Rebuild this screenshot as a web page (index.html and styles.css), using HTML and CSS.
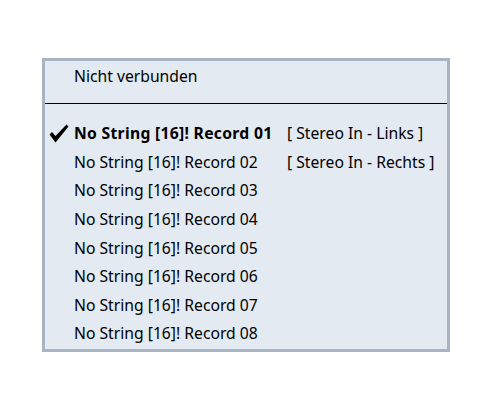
FILE: index.html
```
<!DOCTYPE html>
<html lang="de">
<head>
    <meta charset="UTF-8">
    <title>Eingang</title>
    <link rel="stylesheet" href="styles.css">
</head>
<body>
    <div class="menu">
        <div class="menu-head">Nicht verbunden</div>
        <hr class="sep">
        <ul class="items">
            <li class="item active">
                <span class="check"><svg width="20" height="19" viewBox="0 0 20 19"><path d="M0.5 10.5 L3 8 L6.5 12 L17.5 0.5 L19.5 2.5 L6.5 18.5 Z" fill="#000"/></svg></span>
                <span class="name">No String [16]! Record 01</span>
                <span class="port">[ Stereo In - Links ]</span>
            </li>
            <li class="item">
                <span class="check"></span>
                <span class="name">No String [16]! Record 02</span>
                <span class="port">[ Stereo In - Rechts ]</span>
            </li>
            <li class="item"><span class="check"></span><span class="name">No String [16]! Record 03</span><span class="port"></span></li>
            <li class="item"><span class="check"></span><span class="name">No String [16]! Record 04</span><span class="port"></span></li>
            <li class="item"><span class="check"></span><span class="name">No String [16]! Record 05</span><span class="port"></span></li>
            <li class="item"><span class="check"></span><span class="name">No String [16]! Record 06</span><span class="port"></span></li>
            <li class="item"><span class="check"></span><span class="name">No String [16]! Record 07</span><span class="port"></span></li>
            <li class="item"><span class="check"></span><span class="name">No String [16]! Record 08</span><span class="port"></span></li>
        </ul>
    </div>
</body>
</html>
```
FILE: styles.css
```
body { margin: 0; background: #fff; font-family: "Noto Sans", "Open Sans", sans-serif; font-size: 15.7px; color: #000; }
.menu { box-sizing: border-box; width: 408px; height: 294px; margin: 58px 0 0 42px; background: #e4eaf2; border: 3px solid #a9b4c2; }
.menu-head { height: 28px; line-height: 28px; padding: 1px 0 0 29px; }
.sep { margin: 13px 0 0; border: none; border-top: 1px solid #000; height: 0; }
.items { list-style: none; margin: 14px 0 0; padding: 1px 0 0; }
.item { display: grid; grid-template-columns: 29px 213px auto; height: 28.6px; align-items: center; }
.check { display: flex; align-items: center; padding-left: 4px; }
.active .name { font-weight: bold; letter-spacing: 0.3px; }
```
